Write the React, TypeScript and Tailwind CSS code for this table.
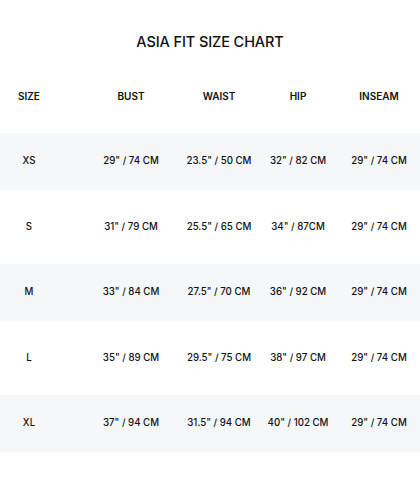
const rows = [
  { size: 'XS', bust: '29" / 74 CM', waist: '23.5" / 50 CM', hip: '32" / 82 CM', inseam: '29" / 74 CM' },
  { size: 'S', bust: '31" / 79 CM', waist: '25.5" / 65 CM', hip: '34" / 87CM', inseam: '29" / 74 CM' },
  { size: 'M', bust: '33" / 84 CM', waist: '27.5" / 70 CM', hip: '36" / 92 CM', inseam: '29" / 74 CM' },
  { size: 'L', bust: '35" / 89 CM', waist: '29.5" / 75 CM', hip: '38" / 97 CM', inseam: '29" / 74 CM' },
  { size: 'XL', bust: '37" / 94 CM', waist: '31.5" / 94 CM', hip: '40" / 102 CM', inseam: '29" / 74 CM' },
]

function Cells({ cells }: { cells: string[] }) {
  return (
    <>
      <div className="w-[58px] text-center">{cells[0]}</div>
      <div className="ml-[35px] w-[76px] text-center">{cells[1]}</div>
      <div className="ml-[12px] w-[76px] text-center">{cells[2]}</div>
      <div className="ml-[3px] w-[76px] text-center">{cells[3]}</div>
      <div className="ml-[5px] w-[76px] text-center">{cells[4]}</div>
    </>
  )
}

export default function App() {
  return (
    <div className="w-[420px] h-[504px] bg-white text-[#111] font-['Inter',sans-serif] overflow-hidden">
      <h1 className="pt-[32px] text-center text-[14.5px] font-medium leading-[20px] tracking-[-0.1px]">
        ASIA FIT SIZE CHART
      </h1>

      {/* header */}
      <div className="mt-[34px] flex items-center h-[20px] text-[10px] font-semibold">
        <Cells cells={['SIZE', 'BUST', 'WAIST', 'HIP', 'INSEAM']} />
      </div>

      <div className="mt-[27px] ml-px">
        {rows.map((r, i) => (
          <div
            key={r.size}
            className={
              i % 2 === 0
                ? 'flex items-center h-[57px] bg-[#f6f7f9] text-[9.7px] font-medium -ml-px'
                : 'flex items-center h-[74px] text-[9.7px] font-medium -ml-px'
            }
          >
            <Cells cells={[r.size, r.bust, r.waist, r.hip, r.inseam]} />
          </div>
        ))}
      </div>
    </div>
  )
}
